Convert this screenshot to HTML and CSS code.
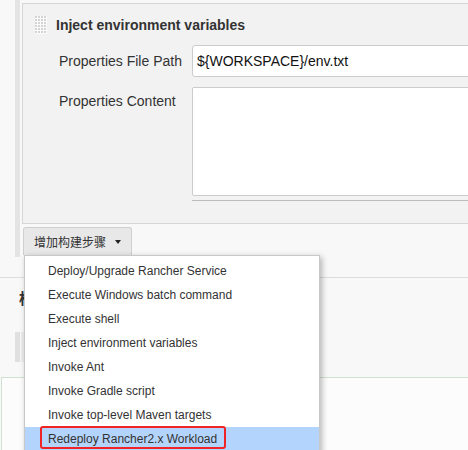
FILE: index.html
```html
<!DOCTYPE html>
<html>
<head>
<meta charset="utf-8">
<link rel="stylesheet" href="styles.css">
</head>
<body>
<div class="page">
  <div class="builders">
    <div class="step">
      <div class="step-head">
        <svg class="grip" width="12" height="18" viewBox="0 0 12 18">
          <defs>
            <pattern id="dots" width="3" height="3" patternUnits="userSpaceOnUse">
              <rect x="0" y="0" width="2" height="2" fill="#d4d4d4"/>
            </pattern>
          </defs>
          <rect x="0" y="0" width="12" height="18" fill="#fbfbfb"/>
          <rect x="0" y="0" width="12" height="18" fill="url(#dots)"/>
        </svg>
        <span class="step-title">Inject environment variables</span>
      </div>
      <div class="field">
        <label class="field-label">Properties File Path</label>
        <div class="field-input"><input class="text" type="text" value="${WORKSPACE}/env.txt"></div>
      </div>
      <div class="field field-top">
        <label class="field-label">Properties Content</label>
        <div class="field-input">
          <textarea class="area"></textarea>
          <div class="area-handle"></div>
        </div>
      </div>
    </div>
    <div class="add-wrap">
      <button class="add-btn">增加构建步骤<span class="caret"></span></button>
      <ul class="menu">
        <li class="menu-item">Deploy/Upgrade Rancher Service</li>
        <li class="menu-item">Execute Windows batch command</li>
        <li class="menu-item">Execute shell</li>
        <li class="menu-item">Inject environment variables</li>
        <li class="menu-item">Invoke Ant</li>
        <li class="menu-item">Invoke Gradle script</li>
        <li class="menu-item">Invoke top-level Maven targets</li>
        <li class="menu-item menu-item-active">Redeploy Rancher2.x Workload<span class="mark"></span></li>
      </ul>
    </div>
  </div>
  <div class="post">
    <div class="post-title">构建后操作</div>
    <div class="post-steps"><div class="post-btn"></div></div>
    <div class="green-box"></div>
  </div>
</div>
</body>
</html>
```

FILE: styles.css
```css
html, body {
  margin: 0;
  padding: 0;
}
body {
  background: #f8f8f8;
  font-family: "Liberation Sans", Arial, "Noto Sans CJK SC", sans-serif;
  color: #333;
  overflow: hidden;
  width: 468px;
  height: 450px;
}
.page {
  width: 800px;
}
.builders {
  margin-left: 15px;
  border-left: 5px solid #e4e4e4;
  padding: 3px 0 2px 2px;
}
.step {
  background: #f2f2f2;
  border: 1px solid #d6d6d6;
  border-right: none;
  padding: 12px 0 22px 0;
}
.step-head {
  display: flex;
  align-items: center;
  height: 18px;
  padding-left: 12px;
  gap: 9px;
}
.grip {
  display: block;
  flex: none;
}
.step-title {
  font-size: 14px;
  font-weight: bold;
  color: #333;
  line-height: 18px;
}
.field {
  display: flex;
  margin-top: 11px;
  padding-left: 36px;
}
.field-top {
  margin-top: 10px;
}
.field-label {
  width: 133px;
  flex: none;
  font-size: 14px;
  line-height: 16px;
  color: #333;
  align-self: center;
}
.field-top .field-label {
  align-self: flex-start;
  padding-top: 6px;
}
.field-input {
  flex: none;
}
.text {
  display: block;
  box-sizing: border-box;
  width: 340px;
  height: 32px;
  border: 1px solid #cccccc;
  border-radius: 3px;
  padding: 0 4px;
  margin: 0;
  font-family: "Liberation Sans", Arial, sans-serif;
  font-size: 14px;
  color: #111;
  background: #fff;
  outline: none;
}
.area {
  display: block;
  box-sizing: border-box;
  width: 340px;
  height: 109px;
  border: 1px solid #cccccc;
  border-radius: 2px;
  margin: 0;
  padding: 0;
  background: #fff;
  resize: none;
}
.area-handle {
  box-sizing: border-box;
  width: 340px;
  height: 5px;
  border-bottom: 1px solid #bcbcbc;
}
.add-wrap {
  position: relative;
  padding-top: 3px;
}
.add-btn {
  display: flex;
  align-items: center;
  box-sizing: border-box;
  width: 109px;
  height: 28px;
  margin: 0 0 0 1px;
  padding: 0 0 0 10px;
  border: 1px solid #cfcfcf;
  border-bottom: none;
  border-radius: 3px 3px 0 0;
  background: #e8e8e8;
  font-family: "Noto Sans CJK SC", "Liberation Sans", sans-serif;
  font-size: 12px;
  color: #333;
}
.caret {
  display: block;
  width: 0;
  height: 0;
  margin-left: 9px;
  border-left: 3.5px solid transparent;
  border-right: 3.5px solid transparent;
  border-top: 4px solid #222;
}
.menu {
  position: absolute;
  left: 2px;
  top: 31px;
  z-index: 10;
  box-sizing: border-box;
  width: 296px;
  margin: 0;
  padding: 3px 0 4px 0;
  list-style: none;
  background: #fff;
  border: 1px solid #c8c8c8;
  box-shadow: 2px 2px 6px rgba(0, 0, 0, 0.28);
}
.menu-item {
  position: relative;
  height: 24px;
  line-height: 24px;
  padding-left: 23px;
  font-size: 12px;
  color: #333;
  white-space: nowrap;
}
.menu-item-active {
  background: #b3d4fc;
}
.mark {
  position: absolute;
  left: 15px;
  top: -1px;
  box-sizing: border-box;
  width: 186px;
  height: 23px;
  border: 2px solid #f02424;
  border-radius: 3px;
}
.post {
  margin-top: 20px;
  border-top: 1px solid #dddddd;
}
.post-title {
  margin-top: 10px;
  padding-left: 19px;
  height: 20px;
  line-height: 20px;
  white-space: nowrap;
  font-size: 15px;
  font-weight: bold;
  color: #333;
  font-family: "Noto Sans CJK SC", sans-serif;
}
.post-steps {
  margin-top: 24px;
  margin-left: 15px;
  border-left: 5px solid #e0e0e0;
  padding-left: 1px;
  height: 30px;
}
.post-btn {
  width: 120px;
  height: 30px;
  background: #ececec;
}
.green-box {
  margin-top: 15px;
  margin-left: 1px;
  height: 200px;
  border: 1px solid #cfe2d2;
  background: #fcfcfc;
}
```
